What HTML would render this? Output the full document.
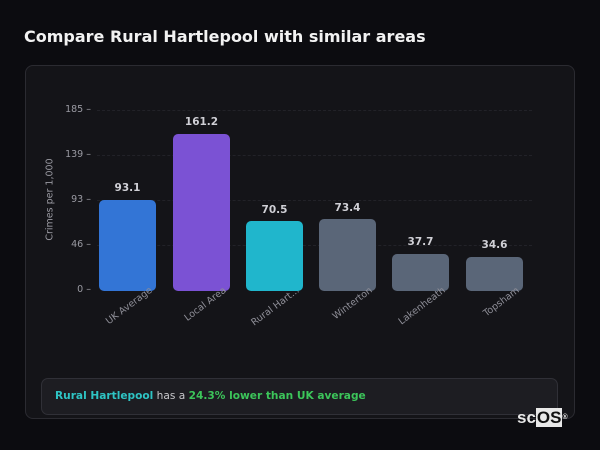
<!DOCTYPE html>
<html><head><style>
body{margin:0;width:600px;height:450px;background:#0c0c10;font-family:"DejaVu Sans","Liberation Sans",sans-serif;position:relative;overflow:hidden}
h1{position:absolute;left:24px;top:27px;margin:0;font-size:16px;font-weight:bold;color:#f2f2f2}
.card{position:absolute;left:25px;top:65px;width:550px;height:354px;background:#141418;border:1px solid #2b2b31;border-radius:8px;box-sizing:border-box}
.yl{position:absolute;color:#9a9aa2;font-size:9.5px;text-align:right;width:38px}
.bar{position:absolute;border-radius:5px;width:57px}
.v{position:absolute;width:57px;text-align:center;color:#d0d0d6;font-size:10.5px;font-weight:bold}
.xl{position:absolute;color:#8f8f98;font-size:9.5px;transform-origin:right top;transform:rotate(-37deg);white-space:nowrap;text-align:right;width:80px}
.grid{position:absolute;left:97px;width:435px;border-top:1px dashed #222228}
.info{position:absolute;left:41px;top:378px;width:517px;height:37px;background:#1d1d22;border:1px solid #303037;border-radius:7px;box-sizing:border-box;font-size:10.6px;color:#c8c8cc;line-height:35px;padding-left:13px}
</style></head><body>
<h1>Compare Rural Hartlepool with similar areas</h1>
<div class="card"></div>
<div class="grid" style="top:110px"></div><div class="grid" style="top:155px"></div><div class="grid" style="top:200px"></div><div class="grid" style="top:245px"></div>
<div class="yl" style="left:53px;top:104px">185 –</div>
<div class="yl" style="left:53px;top:149px">139 –</div>
<div class="yl" style="left:53px;top:194px">93 –</div>
<div class="yl" style="left:53px;top:239px">46 –</div>
<div class="yl" style="left:53px;top:284px">0 –</div>
<div style="position:absolute;left:2px;top:194px;width:96px;color:#9a9aa2;font-size:9.5px;transform:rotate(-90deg);text-align:center">Crimes per 1,000</div>
<div class="bar" style="left:99px;top:200px;height:91px;background:#3375d6"></div>
<div class="bar" style="left:173px;top:134px;height:157px;background:#7b52d4"></div>
<div class="bar" style="left:246px;top:221px;height:70px;background:#20b6cc"></div>
<div class="bar" style="left:319px;top:219px;height:72px;background:#5a6678"></div>
<div class="bar" style="left:392px;top:254px;height:37px;background:#5a6678"></div>
<div class="bar" style="left:466px;top:257px;height:34px;background:#5a6678"></div>
<div class="v" style="left:99px;top:182px">93.1</div>
<div class="v" style="left:173px;top:116px">161.2</div>
<div class="v" style="left:246px;top:204px">70.5</div>
<div class="v" style="left:319px;top:202px">73.4</div>
<div class="v" style="left:392px;top:236px">37.7</div>
<div class="v" style="left:466px;top:239px">34.6</div>
<div class="xl" style="left:68px;top:285px">UK Average</div>
<div class="xl" style="left:142px;top:285px">Local Area</div>
<div class="xl" style="left:215px;top:285px">Rural Hart...</div>
<div class="xl" style="left:288px;top:285px">Winterton</div>
<div class="xl" style="left:361px;top:285px">Lakenheath</div>
<div class="xl" style="left:435px;top:285px">Topsham</div>
<div class="info"><b style="color:#2ec4c4">Rural Hartlepool</b> has a <b style="color:#3cc55a">24.3% lower than UK average</b></div>
<div style="position:absolute;left:517px;top:408px;font-size:17px;font-weight:bold;color:#e8e8e8;line-height:20px;font-family:'Liberation Sans',sans-serif">sc<span style="background:#e8e8e8;color:#111;padding:0 1px">OS</span><sup style="font-size:7px;vertical-align:top">®</sup></div>
</body></html>
